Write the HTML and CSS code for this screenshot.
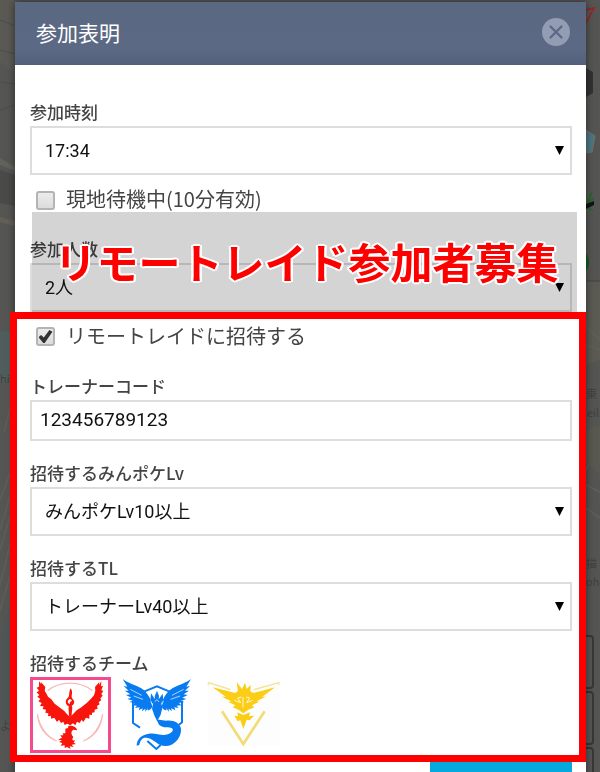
FILE: index.html
```html
<!DOCTYPE html>
<html lang="ja">
<head>
  <meta charset="UTF-8" />
  <meta name="viewport" content="width=device-width, initial-scale=1.0" />
  <title>参加表明</title>
  <link rel="stylesheet" href="styles.css">
</head>
<body>

<!-- 背景の地図 -->
<div class="map" aria-hidden="true">
  <svg class="map-left" width="15" height="772" viewBox="0 0 15 772">
    <path d="M0 0H15V75L0 62Z" fill="#5a5953"/>
    <path d="M0 20L15 26M0 50L15 54M0 82L15 84M0 110L15 105" stroke="#4d4d49" fill="none"/>
    <path d="M0 158L15 167V171L0 165Z" fill="#62615c"/>
    <path d="M0 170L15 175V206L0 203Z" fill="#4a4a49"/>
    <path d="M0 217L15 221V226L0 222Z" fill="#625f56"/>
    <path d="M0 332L15 329V362L5 385L0 382Z" fill="#515c5c"/>
    <path d="M15 390L4 432M15 460L0 500M15 480L0 530M15 500L0 550M15 525L0 585M15 560L0 610" stroke="#5d5c56" stroke-width="2" fill="none"/>
    <path d="M0 640L15 590V715L0 730Z" fill="#505656"/>
    <text x="0" y="383" class="map-text">hi</text>
    <text x="0" y="730" class="map-text">よ</text>
  </svg>
  <svg class="map-right" width="14" height="772" viewBox="0 0 14 772">
    <path d="M0 281H14V360L0 365Z" fill="#5b5a53"/>
    <path d="M0 10L8 8L0 23" stroke="#a51e1e" stroke-width="1.5" fill="none"/>
    <path d="M0 68L7 72V93L0 97Z" fill="#333"/>
    <path d="M0 130L9 136L6 152L0 153Z" fill="#4a7785" stroke="#77735c"/>
    <path d="M0 206L6 192M0 204L8 198M0 206L7 211" stroke="#1d6a28" stroke-width="1.5"/>
    <path d="M0 204L8 201V205L0 209Z" fill="#141414"/>
    <path d="M0 253C4 259 4 266 0 271Z" fill="#145c20"/>
    <path d="M0 281H14" stroke="#434343"/>
    <path d="M0 326L14 340M0 345L14 350M0 470L14 440M0 485L14 492M0 508L14 518" stroke="#5f5e59" stroke-width="2"/>
    <path d="M0 430L14 425V475L0 462Z" fill="#5a5951"/>
    <text x="0" y="398" class="map-text">東</text>
    <text x="1" y="417" class="map-text">eil</text>
    <text x="0" y="568" class="map-text">描</text>
    <text x="0" y="586" class="map-text">oh</text>
    <rect x="-12" y="636" width="19" height="52" rx="3" fill="#575757" stroke="#383838" stroke-width="2"/>
    <rect x="-12" y="692" width="19" height="52" rx="3" fill="#575757" stroke="#383838" stroke-width="2"/>
    <rect x="-12" y="748" width="19" height="52" rx="3" fill="#575757" stroke="#383838" stroke-width="2"/>
  </svg>
</div>

<div class="modal" role="dialog" aria-labelledby="modal-title">
  <header class="modal-header">
    <h1 id="modal-title">参加表明</h1>
    <button type="button" class="close" aria-label="閉じる">
      <svg width="28" height="28" viewBox="0 0 28 28">
        <circle cx="14" cy="14" r="14" fill="#929db3"/>
        <path d="M8.5 8.5L19.5 19.5M19.5 8.5L8.5 19.5" stroke="#5c6984" stroke-width="2.4" stroke-linecap="round"/>
      </svg>
    </button>
  </header>

  <form class="modal-body">
    <div class="field">
      <label for="time">参加時刻</label>
      <div class="select-box">
        <select id="time"><option>17:34</option></select>
      </div>
    </div>

    <div class="check-row check-tall">
      <input type="checkbox" id="waiting">
      <label for="waiting">現地待機中(10分有効)</label>
    </div>

    <div class="people">
      <div class="field">
        <label for="people">参加人数</label>
        <div class="select-box">
          <select id="people"><option>2人</option></select>
        </div>
      </div>
      <div class="banner"><span>リモートレイド参加者募集</span></div>
    </div>

    <section class="remote">
      <div class="check-row">
        <input type="checkbox" id="remote" checked>
        <label for="remote">リモートレイドに招待する</label>
      </div>

      <div class="field">
        <label for="code">トレーナーコード</label>
        <input type="text" id="code" value="123456789123">
      </div>

      <div class="field">
        <label for="minpoke">招待するみんポケLv</label>
        <div class="select-box">
          <select id="minpoke"><option>みんポケLv10以上</option></select>
        </div>
      </div>

      <div class="field">
        <label for="tl">招待するTL</label>
        <div class="select-box">
          <select id="tl"><option>トレーナーLv40以上</option></select>
        </div>
      </div>

      <fieldset class="field">
        <legend>招待するチーム</legend>
        <div class="teams">
          <label class="team">
            <input type="radio" name="team" value="red" aria-label="赤チーム" checked>
            <svg viewBox="39 30 225 210">
              <path d="M83 62C120 32 180 32 217 62" fill="none" stroke="#f9b9b6" stroke-width="4"/>
              <path d="M52 132C60 172 80 198 110 213C78 202 56 176 52 132ZM248 132C240 172 220 198 190 213C222 202 244 176 248 132Z" fill="#f9b9b6" stroke="#f9b9b6" stroke-width="3"/>
              <g fill="#f8150c">
                <path d="M57 34L64 43L63 36L76 51L74 62L80 72L84 80L94 88L104 101L118 112L132 122L144 136L150 140L156 136L170 121L184 112L200 99L213 86L222 76L226 62L225 51L238 36L237 45L244 34L243 49L249 47L244 61L250 62L244 72L248 77L241 85L244 90L236 97L239 103L231 108L233 116L224 119L224 127L216 128L216 135L208 134L208 146L198 143L190 156L185 149L179 159L171 155L166 166L159 160L151 166L142 161L134 165L130 155L123 159L117 149L111 156L103 143L94 146L92 137L84 139L85 130L76 128L78 119L68 117L71 109L60 108L65 99L55 94L61 87L52 80L58 75L50 67L57 62L50 53L57 50Z"/>
                <path fill-rule="evenodd" d="M152 55C162 69 150 79 158 87C166 94 163 104 155 107C159 114 155 120 155 140H147C147 122 144 116 147 109C136 105 134 91 143 84C150 79 145 68 152 55ZM150 87C141 91 141 100 150 102C146 97 155 94 156 91Z"/>
                <path d="M145 168C157 165 170 172 172 181L160 179C152 184 153 193 160 201C154 209 158 215 166 210L161 218L168 222L155 224L161 231L149 229L152 237L141 231L134 234L134 226L122 227L127 219L117 216L126 211L114 209L126 203L121 196L130 196L128 190L136 190L136 176L144 174Z"/>
              </g>
            </svg>
          </label>
          <label class="team">
            <input type="radio" name="team" value="blue" aria-label="青チーム">
            <svg viewBox="12 30 225 210">
              <path d="M87 65L126 49L164 65M54 92V159L75 173M201 92V157L192 164M97 213L124 237L137 225" fill="none" stroke="#087bf0" stroke-width="6"/>
              <g fill="#087bf0">
                <path d="M23 27C36 38 59 44 79 55C92 63 101 76 109 94L112 110C108 118 102 122 97 120L99 114L91 125L91 116L81 124L83 115L71 121L74 112L60 114L66 107L52 106L59 99L43 96L54 92L37 87L49 83L33 75L46 73L29 62L41 62L26 48L37 50Z"/>
                <path d="M228 27C215 38 192 44 172 55C159 63 149 76 142 94L140 110C144 118 150 122 155 120L153 114L162 125L161 116L171 124L168 115L181 121L178 112L191 114L185 107L199 106L192 99L208 96L198 92L214 87L202 83L218 75L206 73L222 62L210 62L225 48L214 50Z"/>
                <path d="M126 62L132 78L131 88L143 71L145 91L139 99L142 113L137 134L129 149L125 151L119 139L111 116L114 102L106 92L108 70L120 88L119 79Z"/>
                <path d="M125 150C137 147 144 152 153 152C176 149 196 160 198 176C200 199 181 228 151 228C128 228 119 209 99 204C84 200 76 208 73 225L65 227C65 205 82 193 102 191C123 188 139 199 158 193C171 189 177 181 171 175C163 169 146 177 132 164Z"/>
              </g>
              <path d="M46 58L80 76M56 78L84 88M206 58L171 76M195 78L167 88M107 92L111 104M145 92L141 104M119 95L126 89L132 96" stroke="#fff" stroke-width="2" fill="none"/>
            </svg>
          </label>
          <label class="team">
            <input type="radio" name="team" value="yellow" aria-label="黄チーム">
            <svg viewBox="15 30 225 210">
              <rect x="23" y="33" width="215" height="193" fill="#fdfdfd"/>
              <path d="M25 38L92 59M237 38L162 59" stroke="#f6e18a" stroke-width="4"/>
              <path d="M25 36V46M237 36V46" stroke="#f6e18a" stroke-width="3"/>
              <path d="M66 124L130 222L194 124" fill="none" stroke="#f1dc76" stroke-width="8"/>
              <g fill="#fbcd14">
                <path d="M38 52L106 69L114 63L110 36L126 57L135 38L140 57L152 45L151 64L160 69L225 52L187 80L197 80L170 94L178 95L156 106L163 112L145 119L130 130L115 119L98 112L106 106L85 96L94 94L65 80L77 80Z"/>
                <path d="M112 127L130 135L150 127L147 139L162 137L149 151L140 149L130 177L121 151L113 154L103 137L114 139Z"/>
              </g>
              <path d="M103 91L122 98L113 84L124 81M158 91L140 98L149 84L138 81M129 81V113" fill="none" stroke="#fff8d6" stroke-width="3"/>
            </svg>
          </label>
        </div>
      </fieldset>
    </section>

    <div class="actions">
      <button type="submit" class="submit" aria-label="参加表明"></button>
    </div>
  </form>
</div>

</body>
</html>
```
FILE: styles.css
```css
* {
  box-sizing: border-box;
}
body {
  margin: 0;
  height: 100vh;
  overflow: hidden;
  background: #555;
  color: #444;
  font-family: "Noto Sans CJK JP", sans-serif;
}
.map {
  position: fixed;
  inset: 0;
  display: flex;
  justify-content: space-between;
  background: #555553;
}
.map-text {
  font-size: 11px;
  fill: #414141;
}
.modal {
  position: relative;
  margin: 2px 14px 0 15px;
  background: #fff;
  box-shadow: 0 0 8px rgba(0, 0, 0, 0.5);
}
.modal-header {
  display: flex;
  align-items: center;
  justify-content: space-between;
  height: 63px;
  padding: 0 16px 4px 21px;
  background: linear-gradient(#5a6882, #5c6984 75%, #53607b);
}
.modal-header h1 {
  margin: 0;
  font-size: 21px;
  font-weight: 400;
  line-height: 30px;
  color: #fff;
}
.close {
  display: flex;
  padding: 0;
  border: none;
  background: none;
  cursor: pointer;
}
.modal-body {
  padding: 35px 14px 20px 15px;
}
.field {
  margin: 0;
  padding: 0;
  border: none;
}
.field > label,
.field > legend {
  display: block;
  padding: 0 0 2px;
  font-size: 17px;
  font-weight: 500;
  line-height: 24px;
}
.select-box {
  position: relative;
}
.select-box::after {
  content: "";
  position: absolute;
  top: 20px;
  right: 8px;
  width: 9px;
  height: 9px;
  background: #000;
  clip-path: polygon(0 0, 100% 0, 50% 100%);
  pointer-events: none;
}
select,
input[type="text"] {
  display: block;
  width: 100%;
  border: 2px solid #ddd;
  border-radius: 0;
  background: #fff;
  color: #111;
  font-family: Roboto, "Noto Sans CJK JP", sans-serif;
}
select {
  appearance: none;
  height: 49px;
  padding: 0 30px 0 13px;
  font-size: 18px;
}
input[type="text"] {
  height: 41px;
  padding: 0 8px 2px;
  font-size: 19px;
}
.check-row {
  display: flex;
  align-items: center;
  gap: 11px;
  height: 35px;
  padding-left: 6px;
  font-size: 20px;
  line-height: 30px;
}
.check-row label {
  padding-bottom: 2px;
}
.check-tall {
  height: 50px;
}
input[type="checkbox"] {
  appearance: none;
  display: grid;
  place-items: center;
  width: 19px;
  height: 19px;
  margin: 0;
  border: 2px solid #b4b4b4;
  border-radius: 3px;
  background: linear-gradient(#ececec, #dcdcdc);
}
input[type="checkbox"]:checked::before {
  content: "";
  width: 14px;
  height: 13px;
  background: #333;
  clip-path: polygon(0 55%, 18% 38%, 38% 58%, 78% 0, 100% 14%, 44% 100%, 34% 100%);
}

/* 参加人数 + 帯 */
.people {
  position: relative;
  padding-top: 12px;
}
.banner {
  position: absolute;
  top: -13px;
  right: -5px;
  bottom: 0;
  left: 2px;
  display: flex;
  align-items: center;
  justify-content: center;
  padding: 0 0 2px 4px;
  background: rgba(0, 0, 0, 0.17);
  color: #f00;
  font-size: 42px;
  font-weight: 700;
  line-height: 60px;
  white-space: nowrap;
  text-shadow: 2px 0 #fff, -2px 0 #fff, 0 2px #fff, 0 -2px #fff,
    1px 1px #fff, -1px 1px #fff, 1px -1px #fff, -1px -1px #fff,
    2px 1px #fff, -2px 1px #fff, 2px -1px #fff, -2px -1px #fff;
  pointer-events: none;
}

/* 赤枠 */
.remote {
  position: relative;
  display: flex;
  flex-direction: column;
  gap: 20px;
  margin: 0 -14px 0 -20px;
  padding: 0 7px 2px 13px;
  border: 7px solid #f00;
}
.teams {
  display: flex;
  gap: 5px;
}
.team {
  width: 81px;
  height: 76px;
  border: 3px solid transparent;
}
.team:has(input:checked) {
  border-color: #f54a8b;
}
.team input {
  position: absolute;
  opacity: 0;
}
.team svg {
  display: block;
  width: 100%;
  height: 100%;
  overflow: visible;
}
.actions {
  display: flex;
  justify-content: flex-end;
}
.submit {
  width: 142px;
  height: 48px;
  border: none;
  background: #06a9dd;
}
```
